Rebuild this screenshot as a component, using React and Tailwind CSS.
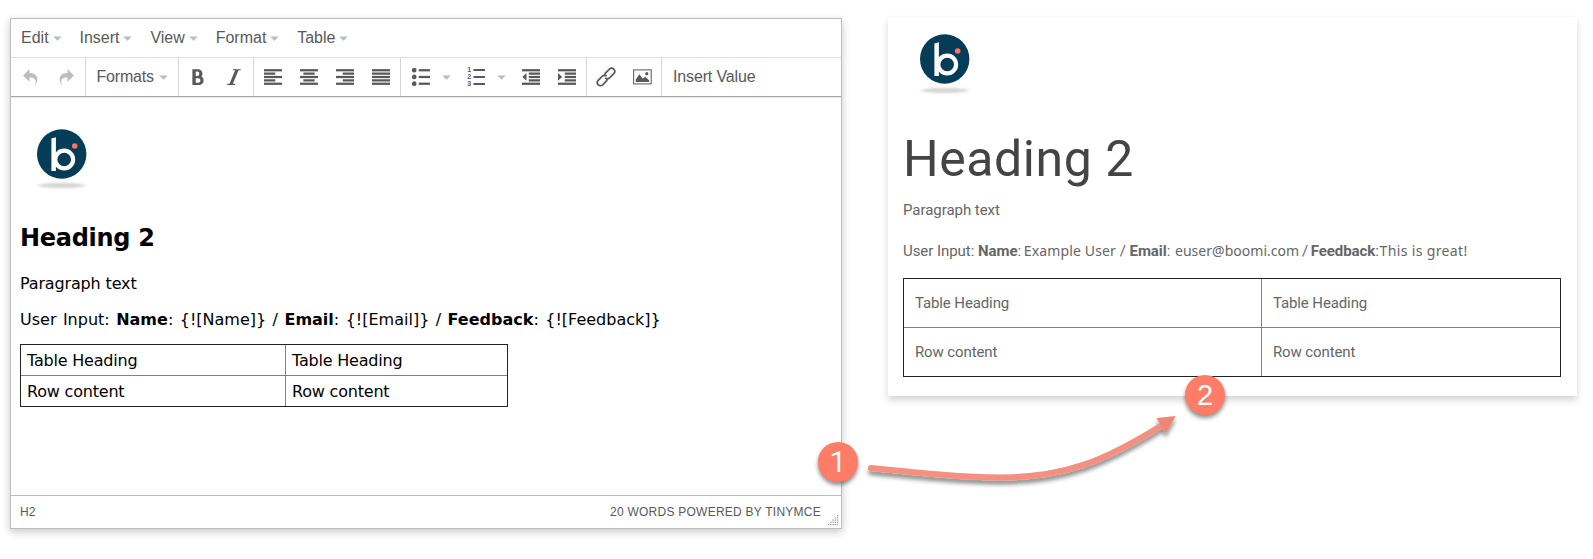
const ICON = 'h-[18px] w-[18px] fill-[#595959]';

function Caret({ className = '' }) {
  return (
    <svg className={`h-[5px] w-[9px] shrink-0 fill-[#b5bcc2] ${className}`} viewBox="0 0 9 5">
      <path d="M0.3 0.4h8.4L4.5 4.8z" />
    </svg>
  );
}

function MenuItem({ label }) {
  return (
    <div className="flex items-center gap-1">
      <span>{label}</span>
      <Caret />
    </div>
  );
}

function Button({ children }) {
  return <div className="flex h-full w-9 items-center justify-center">{children}</div>;
}

function Bars({ rows, children }) {
  return (
    <svg className={ICON} viewBox="0 0 1024 1024">
      {rows.map(([x, w], i) =>
        w ? <rect key={i} x={x} y={64 + i * 192} width={w} height="128" /> : null
      )}
      {children}
    </svg>
  );
}

const FULL = [0, 1024];
const NONE = [0, 0];
const LIST = [384, 640];

function Group({ className = '', children }) {
  return <div className={`flex h-full items-center border-r border-[#d5d5d5] ${className}`}>{children}</div>;
}

function Logo() {
  return (
    <svg className="block h-[72px] w-16" viewBox="0 0 64 72">
      <defs>
        <filter id="soft" x="-20%" y="-150%" width="140%" height="400%">
          <feGaussianBlur stdDeviation="2 1.3" />
        </filter>
      </defs>
      <ellipse cx="31.7" cy="61.5" rx="23.5" ry="2.6" fill="#d6d6d6" filter="url(#soft)" />
      <circle cx="31.7" cy="30" r="24.7" fill="#053c57" />
      <path d="M21.4 14.6L25.9 13.3V47H21.4z" fill="#fff" />
      <circle cx="34.2" cy="35.5" r="8.9" fill="none" stroke="#fff" strokeWidth="4.2" />
      <circle cx="44.7" cy="22" r="2.8" fill="#ff7460" />
    </svg>
  );
}

function Toolbar() {
  return (
    <div className="flex h-[39px] items-center border-b border-[#a6a6a6] shadow-[0_1px_1px_rgba(0,0,0,0.08)]">
      <Group className="w-[75px] pl-px">
        <Button>
          <svg className="h-[17px] w-[17px] fill-[#bdbdbd]" viewBox="0 0 1024 1024">
            <path d="M761.862 1024c113.726-206.032 132.888-520.306-313.862-509.824v253.824l-384-384 384-384v248.372c534.962-13.942 594.57 472.214 313.862 775.628z" />
          </svg>
        </Button>
        <Button>
          <svg className="h-[17px] w-[17px] fill-[#bdbdbd]" viewBox="0 0 1024 1024">
            <path d="M576 248.372v-248.372l384 384-384 384v-253.824c-446.75-10.482-427.588 303.792-313.86 509.824-280.712-303.414-221.1-789.57 313.86-775.628z" />
          </svg>
        </Button>
      </Group>
      <Group className="w-[93px] pl-[10.500px]">
        <span className="w-[62.500px] tracking-[-0.2px]">Formats</span>
        <Caret />
      </Group>
      <Group className="w-[75px] pl-px">
        <Button>
          <svg className={ICON} viewBox="0 0 1024 1024">
            <path d="M707.88 484.652c37.498-44.542 60.12-102.008 60.12-164.652 0-141.16-114.842-256-256-256h-320v896h384c141.158 0 256-114.842 256-256 0-92.956-49.798-174.496-124.12-219.348zM384 192h101.5c55.968 0 101.5 57.42 101.5 128s-45.532 128-101.5 128h-101.5v-256zM543 832h-159v-256h159c58.45 0 106 57.42 106 128s-47.55 128-106 128z" />
          </svg>
        </Button>
        <Button>
          <svg className={ICON} viewBox="0 0 1024 1024">
            <path d="M896 64v64h-128l-320 768h128v64h-448v-64h128l320-768h-128v-64z" />
          </svg>
        </Button>
      </Group>
      <Group className="w-[147px] pl-px">
        <Button><Bars rows={[FULL, [0, 640], FULL, [0, 640], FULL]} /></Button>
        <Button><Bars rows={[FULL, [192, 640], FULL, [192, 640], FULL]} /></Button>
        <Button><Bars rows={[FULL, [384, 640], FULL, [384, 640], FULL]} /></Button>
        <Button><Bars rows={[FULL, FULL, FULL, FULL, FULL]} /></Button>
      </Group>
      <Group className="w-[186px] pl-[2px]">
        <Button>
          <Bars rows={[LIST, NONE, LIST, NONE, LIST]}>
            <circle cx="128" cy="124" r="132" />
            <circle cx="128" cy="508" r="132" />
            <circle cx="128" cy="892" r="132" />
          </Bars>
        </Button>
        <div className="mr-[4px] flex w-[15px] justify-center"><Caret /></div>
        <Button>
          <svg className="h-[20px] w-[18px] fill-[#595959]" viewBox="0 0 18 20">
            <rect x="6.5" y="2" width="11.5" height="2" />
            <rect x="6.5" y="9" width="11.5" height="2" />
            <rect x="6.5" y="16" width="11.5" height="2" />
            <g className="font-['Liberation_Sans'] text-[7px] font-bold">
              <text x="0.3" y="5.4">1</text>
              <text x="0.3" y="12.3">2</text>
              <text x="0.3" y="19">3</text>
            </g>
          </svg>
        </Button>
        <div className="mr-[4px] flex w-[15px] justify-center"><Caret /></div>
        <Button>
          <Bars rows={[FULL, LIST, LIST, LIST, FULL]}><path d="M256 290v440L20 510z" /></Bars>
        </Button>
        <Button>
          <Bars rows={[FULL, LIST, LIST, LIST, FULL]}><path d="M0 290v440L236 510z" /></Bars>
        </Button>
      </Group>
      <Group className="w-[75px] pl-px">
        <Button>
          <svg className="h-5 w-5" viewBox="0 0 20 20" fill="none" stroke="#595959" strokeWidth="1.7">
            <g transform="rotate(-45 10 10)">
              <path d="M9.6 12.2A3 3 0 0 1 8 13.1H2.1a3.1 3.1 0 0 1 0-6.2H8a3.1 3.1 0 0 1 3.1 3.1" />
              <path d="M10.4 7.8A3 3 0 0 1 12 6.900H17.900a3.1 3.1 0 0 1 0 6.2H12A3.1 3.1 0 0 1 8.900 10" />
            </g>
          </svg>
        </Button>
        <Button>
          <svg className="h-4 w-[19px]" viewBox="0 0 19 16">
            <rect x="0.6" y="0.9" width="17.6" height="14" fill="none" stroke="#666" strokeWidth="1.1" />
            <path d="M2.8 13V10.6L6.4 5.2L9.8 9.7L12.2 7.7L16 11.3V13z" fill="#595959" />
            <circle cx="13.8" cy="4.7" r="1.6" fill="#595959" />
          </svg>
        </Button>
      </Group>
      <span className="pl-[11px] tracking-[-0.15px]">Insert Value</span>
    </div>
  );
}

function Editor() {
  return (
    <div className="flex h-[511px] w-[832px] shrink-0 flex-col border border-[#bdbdbd] bg-white font-['Liberation_Sans',sans-serif] text-base text-[#595959] shadow-[0_3px_8px_rgba(0,0,0,0.22)]">
      <div className="flex h-[39px] items-center gap-[17.9px] border-b border-[#e0e0e0] pl-[10px]">
        <MenuItem label="Edit" />
        <MenuItem label="Insert" />
        <MenuItem label="View" />
        <MenuItem label="Format" />
        <MenuItem label="Table" />
      </div>
      <Toolbar />
      <div className="flex flex-1 flex-col items-start pl-[9px] pt-[27px] font-['DejaVu_Sans',sans-serif] text-black">
        <div className="ml-[10px]"><Logo /></div>
        <h2 className="mt-[27px] text-2xl/[30px] font-bold tracking-[-0.3px]">Heading 2</h2>
        <p className="mt-[19px] leading-6 tracking-[-0.15px]">Paragraph text</p>
        <p className="mt-3 whitespace-nowrap leading-6 [word-spacing:1.35px]">
          User Input: <b>Name</b>: {'{![Name]}'} / <b>Email</b>: {'{![Email]}'} / <b>Feedback</b>: {'{![Feedback]}'}
        </p>
        <div className="mt-3 grid h-[63px] w-[488px] grid-cols-[265px_1fr] grid-rows-[31px_1fr] border border-[#222] leading-[32px] tracking-[-0.2px]">
          <div className="border-b border-r border-[#808080] pl-[6px]">Table Heading</div>
          <div className="border-b border-[#808080] pl-[6px]">Table Heading</div>
          <div className="h-[30px] border-r border-[#808080] pl-[6px]">Row content</div>
          <div className="h-[30px] pl-[6px]">Row content</div>
        </div>
      </div>
      <div className="flex h-[33px] items-center border-t border-[#bdbdbd] pl-[9px] pr-[2px] text-xs">
        <span>H2</span>
        <span className="ml-auto mr-[7px] tracking-[0.25px]">20 WORDS POWERED BY TINYMCE</span>
        <svg className="mb-[2px] h-[11px] w-[11px] self-end fill-[#8e8e99]" viewBox="0 0 11 11">
          {[0, 1, 2, 3, 4].map((r) =>
            [0, 1, 2, 3, 4].filter((c) => c + r >= 4).map((c) => (
              <rect key={`${r}-${c}`} x={c * 2.25} y={r * 2.25} width="1.2" height="1.2" />
            ))
          )}
        </svg>
      </div>
    </div>
  );
}

function Preview() {
  return (
    <div className="ml-[46px] mt-[-1px] h-[379px] w-[689px] shrink-0 bg-white pl-[15px] pt-3 font-['Roboto',sans-serif] text-[15px] text-[#666] shadow-[0_4px_7px_rgba(0,0,0,0.17)]">
      <div className="ml-[10px]"><Logo /></div>
      <h2 className="mt-7 text-[50px]/[60px] tracking-[0.55px] text-[#444]">Heading 2</h2>
      <p className="mt-[9px] leading-6 tracking-[-0.05px]">Paragraph text</p>
      <p className="mt-[17px] whitespace-nowrap leading-6 tracking-[-0.05px]">
        User Input: <b>Name</b>: <span className="-ml-px font-['Noto_Sans'] text-[14px] tracking-[0.15px]">Example User</span> / <b>Email</b>:{' '}
        <span className="ml-px font-['Noto_Sans'] text-[14px] tracking-[0.03px]">euser@boomi.com</span>
        <span className="-mx-px"> / </span><b>Feedback</b>:{' '}
        <span className="-ml-[3px] font-['Noto_Sans'] text-[14px] tracking-[0.35px]">This is great!</span>
      </p>
      <div className="mt-[15px] grid h-[99px] w-[658px] grid-cols-[358px_1fr] grid-rows-[49px_1fr] border border-[#222] leading-[48px] tracking-[-0.12px]">
        <div className="border-b border-r border-[#808080] pl-[11px]">Table Heading</div>
        <div className="border-b border-[#808080] pl-[11px]">Table Heading</div>
        <div className="border-r border-[#808080] pl-[11px]">Row content</div>
        <div className="pl-[11px]">Row content</div>
      </div>
    </div>
  );
}

function Badge({ n, className }) {
  return (
    <div className={`absolute flex h-10 w-10 items-center justify-center rounded-full bg-[#ff7c67] pt-px text-[29px] leading-none text-white shadow-[0_3px_4px_rgba(0,0,0,0.45)] ${className}`}>
      {n}
    </div>
  );
}

function Arrow() {
  return (
    <svg className="absolute left-[860px] top-[400px] h-[100px] w-[330px]" viewBox="860 400 330 100">
      <defs>
        <filter id="drop" x="-5%" y="-20%" width="110%" height="150%">
          <feDropShadow dx="0" dy="4" stdDeviation="2.2" floodColor="#000" floodOpacity="0.45" />
        </filter>
      </defs>
      <g filter="url(#drop)">
        <path d="M871 468C925 473.500 965 477.500 1000 477.500C1065 477.500 1105 461 1163 424.500" fill="none" stroke="#f58f80" strokeWidth="6" strokeLinecap="round" />
        <path d="M1156.500 418L1175.800 416L1165.500 433.500z" fill="#ee8676" />
      </g>
    </svg>
  );
}

export default function App() {
  return (
    <div className="relative h-[559px] w-[1593px] overflow-hidden bg-white">
      <div className="flex items-start pl-[10px] pt-[18px]">
        <Editor />
        <Preview />
      </div>
      <Arrow />
      <Badge n="1" className="left-[818px] top-[442px] font-['Roboto',sans-serif]" />
      <Badge n="2" className="left-[1185px] top-[375px] font-['Liberation_Sans',sans-serif]" />
    </div>
  );
}
